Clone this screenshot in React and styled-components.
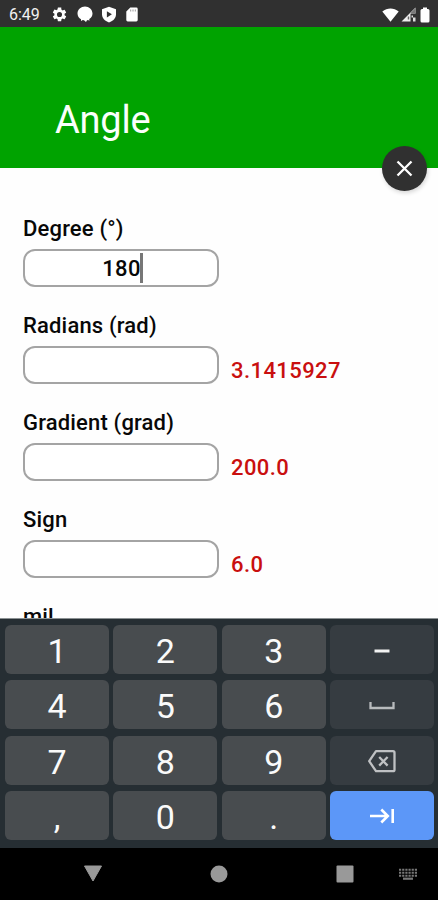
import React from "react";
import styled, { createGlobalStyle } from "styled-components";

const GlobalStyle = createGlobalStyle`
  * { box-sizing: border-box; }
  body { margin: 0; background: #fff; font-family: Roboto, sans-serif; }
  button { font: inherit; border: 0; padding: 0; }
`;

const Screen = styled.div`
  width: 438px;
  height: 900px;
  display: flex;
  flex-direction: column;
  overflow: hidden;
  background: #fefefe;
`;

const StatusBar = styled.header`
  flex: 0 0 27px;
  display: flex;
  align-items: center;
  padding: 2px 8px 0 9px;
  background: #303030;
  color: #f2f2f2;
`;

const Clock = styled.span`
  width: 42px;
  font-size: 16px;
  line-height: 20px;
`;

const StatusIcons = styled.div`
  display: flex;
  align-items: center;
  gap: ${(p) => p.$gap}px;
  margin-left: ${(p) => (p.$end ? "auto" : "0")};
  svg { display: block; }
`;

const TitleBar = styled.div`
  position: relative;
  flex: 0 0 141px;
  padding: 68px 0 0 55px;
  background: #00a300;
`;

const Title = styled.h1`
  margin: 0;
  color: #fbfffb;
  font-size: 38px;
  font-weight: 400;
  line-height: 50px;
  letter-spacing: -0.2px;
`;

const CloseButton = styled.button`
  position: absolute;
  right: 11px;
  bottom: -23px;
  width: 45px;
  height: 45px;
  display: grid;
  place-items: center;
  border-radius: 50%;
  background: #303030;
  box-shadow: 1px 2px 4px rgba(0, 0, 0, 0.16);
`;

const Form = styled.main`
  flex: 1 1 0;
  min-height: 0;
  overflow: hidden;
  padding: 46px 23px 0;
`;

const Field = styled.div`
  height: 97px;
`;

const Label = styled.label`
  display: block;
  height: 35px;
  color: #080808;
  font-size: 22px;
  font-weight: 500;
  line-height: 30px;
  letter-spacing: 0.17px;
  white-space: nowrap;
`;

const FieldRow = styled.div`
  display: flex;
`;

const InputBox = styled.div`
  width: 196px;
  height: 38px;
  display: flex;
  align-items: center;
  justify-content: center;
  border: 2px solid #a4a4a4;
  border-radius: 12px;
  background: #fff;
  color: #080808;
  font-size: 22px;
  font-weight: 500;
  letter-spacing: 0.4px;
  line-height: 30px;
  padding: 2px 0 0 2px;
`;

const Caret = styled.span`
  width: 3px;
  height: 30px;
  margin: -2px -1px 0 -1px;
  background: #777;
`;

const Result = styled.output`
  margin-left: 12px;
  padding-top: 10px;
  color: #c90f0f;
  font-size: 22px;
  font-weight: 500;
  letter-spacing: 0.42px;
  line-height: 30px;
`;

const Keyboard = styled.section`
  flex: 0 0 230px;
  display: grid;
  grid-template-columns: repeat(4, 104px);
  grid-template-rows: repeat(4, 49px);
  column-gap: 4.4px;
  row-gap: 6.4px;
  padding: 6px 0 0 5px;
  border-top: 1px solid #8b9193;
  background: #262e33;
`;

const keyColors = { digit: "#484c4f", action: "#363c41", next: "#5c97f8" };

const Key = styled.button`
  display: flex;
  align-items: center;
  justify-content: center;
  border-radius: 6px;
  background: ${(p) => keyColors[p.$kind]};
  color: #fafafa;
  font-size: 34px;
  line-height: 48px;
  padding-top: 3px;
`;

const KeyIcon = styled.svg`
  display: block;
  margin-top: ${(p) => p.$lift ?? -3}px;
`;

const NavBar = styled.nav`
  flex: 0 0 52px;
  display: flex;
  align-items: center;
  padding: 0 21px 0 83px;
  background: #000;
  svg { display: block; }
`;

const NavButton = styled.button`
  margin-left: ${(p) => p.$before || 0}px;
  background: none;
`;

const SettingsIcon = () => (
  <svg width="17" height="17" viewBox="0 0 24 24" fill="#fff">
    <path d="M19.14 12.94c.04-.3.06-.61.06-.94s-.02-.64-.07-.94l2.03-1.58a.49.49 0 0 0 .12-.61l-1.92-3.32a.49.49 0 0 0-.59-.22l-2.39.96a7 7 0 0 0-1.62-.94l-.36-2.54A.48.48 0 0 0 13.92 2h-3.84a.47.47 0 0 0-.47.41l-.36 2.54c-.59.24-1.13.57-1.62.94l-2.39-.96a.48.48 0 0 0-.59.22L2.74 8.87a.47.47 0 0 0 .12.61l2.03 1.58a6 6 0 0 0 0 1.88l-2.03 1.58a.49.49 0 0 0-.12.61l1.92 3.32c.12.22.37.29.59.22l2.39-.96c.5.38 1.03.7 1.62.94l.36 2.54c.05.24.24.41.48.41h3.84c.24 0 .44-.17.47-.41l.36-2.54a7 7 0 0 0 1.62-.94l2.39.96c.22.08.47 0 .59-.22l1.92-3.32a.47.47 0 0 0-.12-.61ZM12 15.6a3.6 3.6 0 1 1 0-7.2 3.6 3.6 0 0 1 0 7.2Z" />
  </svg>
);

const BubbleIcon = () => (
  <svg width="16" height="17" viewBox="0 0 16 17" fill="#fff">
    <path d="M8 .5C4 .5.5 3.600.5 7.500c0 2.700 1.400 4.600 3.500 5.700V15l1.800-1 1.200.2L9 16l1-1.800 1.300-.3 1 1.100v-1.900c2-1.200 3.200-3 3.200-5.500C15.500 3.600 12 .5 8 .5Z" />
  </svg>
);

const ShieldIcon = () => (
  <svg width="16" height="17" viewBox="0 0 16 17">
    <path d="m8 .8 7 2.500v5C15 12 12.300 15 8 16.500 3.700 15 1 12 1 8.300v-5Z" fill="#fff" />
    <path d="M5.900 5.200v6.200l5-3.100Z" fill="#303030" />
  </svg>
);

const CardIcon = () => (
  <svg width="12" height="15" viewBox="0 0 12 15">
    <path d="M4.300.5h6a1.400 1.400 0 0 1 1.400 1.400v11.200a1.400 1.400 0 0 1-1.400 1.400H1.700A1.400 1.400 0 0 1 .3 13.100V4.500Z" fill="#fff" />
    <path d="M4.700 2.500v2M7 2.500v2M9.300 2.500v2" stroke="#999" />
  </svg>
);

const WifiIcon = () => (
  <svg width="17" height="14" viewBox="0 0 17 14" fill="#fff">
    <path d="M.3 3.500C5.200-.5 11.800-.5 16.700 3.500L8.500 13.700Z" />
  </svg>
);

const SignalIcon = () => (
  <svg width="15" height="15" viewBox="0 0 15 15">
    <path d="M14.500.5V6.500H9.500v8H.5Z" fill="#eee" />
    <path d="M10 5.500 14.500 1v5.500H10Z" fill="#777" />
    <path d="M10.500 8.500h1.500v2h-1.500ZM12 10.500h2.500v4H12Z" fill="#ddd" />
    <path d="M7.500 9.500v3" stroke="#666" strokeWidth="1.500" />
  </svg>
);

const BatteryIcon = () => (
  <svg width="10" height="16" viewBox="0 0 10 16" fill="#fff">
    <path d="M3 .5h4V2h1a1.500 1.500 0 0 1 1.500 1.500v10.500A1.500 1.500 0 0 1 8 15.500H2A1.500 1.500 0 0 1 .5 14V3.500A1.500 1.500 0 0 1 2 2h1Z" />
  </svg>
);

const CloseIcon = () => (
  <svg width="17" height="17" viewBox="0 0 17 17">
    <path d="m1.500 1.500 14 14M15.500 1.500l-14 14" stroke="#fff" strokeWidth="2.300" />
  </svg>
);

const MinusIcon = () => (
  <KeyIcon width="26" height="20" viewBox="0 0 26 20">
    <path d="M5.500 11h15" stroke="#f2f2f2" strokeWidth="3" />
  </KeyIcon>
);

const SpaceIcon = () => (
  <KeyIcon width="26" height="20" viewBox="0 0 26 20">
    <path d="M1.500 7v6h23V7" fill="none" stroke="#b8bbbd" strokeWidth="2.300" />
  </KeyIcon>
);

const BackspaceIcon = () => (
  <KeyIcon $lift={-1} width="30" height="24" viewBox="0 0 30 24">
    <path d="M9 2.200h17a1.500 1.500 0 0 1 1.500 1.500v17a1.500 1.500 0 0 1-1.500 1.500H9L2.200 12.200Z" fill="none" stroke="#bfc1c3" strokeWidth="2.300" strokeLinejoin="round" />
    <path d="m12.200 8 8.400 8.600m0-8.600-8.400 8.600" stroke="#bfc1c3" strokeWidth="2.300" />
  </KeyIcon>
);

const NextIcon = () => (
  <KeyIcon width="26" height="20" viewBox="0 0 26 20">
    <path d="M1 10h17M12.300 3.500l6.500 6.500-6.500 6.500M23.700 3v14" fill="none" stroke="#fff" strokeWidth="2.600" />
  </KeyIcon>
);

const KeyboardIcon = () => (
  <svg width="18" height="13" viewBox="0 0 18 13" stroke="#777" fill="none">
    <path d="M0 1.800h18M0 4.800h18M0 7.700h18" strokeWidth="2" strokeDasharray="2.200 .96" />
    <path d="M4 10.700h10" strokeWidth="2.200" />
  </svg>
);

const fields = [
  { label: "Degree (°)", value: "180" },
  { label: "Radians (rad)", result: "3.1415927" },
  { label: "Gradient (grad)", result: "200.0" },
  { label: "Sign", result: "6.0" },
  { label: "mil" },
];

const keys = [
  "1", "2", "3", { name: "minus", icon: <MinusIcon /> },
  "4", "5", "6", { name: "space", icon: <SpaceIcon /> },
  "7", "8", "9", { name: "backspace", icon: <BackspaceIcon /> },
  ",", "0", ".", { name: "next", icon: <NextIcon />, kind: "next" },
];

export default function App() {
  return (
    <Screen>
      <GlobalStyle />
      <StatusBar>
        <Clock>6:49</Clock>
        <StatusIcons $gap={8.5}>
          <SettingsIcon />
          <BubbleIcon />
          <ShieldIcon />
          <CardIcon />
        </StatusIcons>
        <StatusIcons $gap={2} $end>
          <WifiIcon />
          <SignalIcon />
          <span />
          <BatteryIcon />
        </StatusIcons>
      </StatusBar>
      <TitleBar>
        <Title>Angle</Title>
        <CloseButton aria-label="Close"><CloseIcon /></CloseButton>
      </TitleBar>
      <Form>
        {fields.map((f) => (
          <Field key={f.label}>
            <Label>{f.label}</Label>
            <FieldRow>
              <InputBox>{f.value}{f.value && <Caret />}</InputBox>
              {f.result && <Result>{f.result}</Result>}
            </FieldRow>
          </Field>
        ))}
      </Form>
      <Keyboard>
        {keys.map((k) =>
          typeof k === "string" ? (
            <Key key={k} $kind="digit">{k}</Key>
          ) : (
            <Key key={k.name} $kind={k.kind || "action"} aria-label={k.name}>{k.icon}</Key>
          )
        )}
      </Keyboard>
      <NavBar>
        <NavButton aria-label="Back">
          <svg width="20" height="18" viewBox="0 0 20 18"><path d="M1.500 1h17L10 16Z" fill="#999" stroke="#999" strokeLinejoin="round" /></svg>
        </NavButton>
        <NavButton aria-label="Home" $before={107}>
          <svg width="18" height="18" viewBox="0 0 18 18"><circle cx="9" cy="9" r="8.500" fill="#999" /></svg>
        </NavButton>
        <NavButton aria-label="Recents" $before={108}>
          <svg width="18" height="18" viewBox="0 0 18 18"><rect x=".5" y=".5" width="17" height="17" rx="1" fill="#999" /></svg>
        </NavButton>
        <NavButton aria-label="Switch keyboard" $before={45}><KeyboardIcon /></NavButton>
      </NavBar>
    </Screen>
  );
}
